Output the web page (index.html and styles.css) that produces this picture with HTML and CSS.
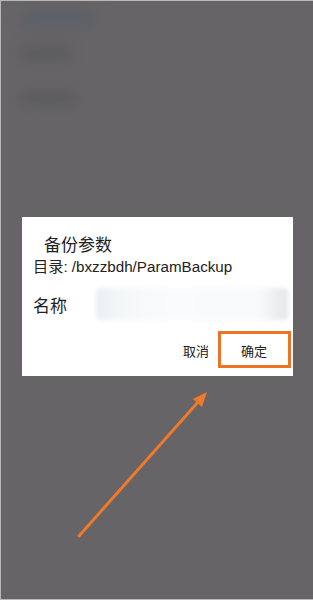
FILE: index.html
```html
<!DOCTYPE html>
<html lang="zh-CN">
<head>
  <meta charset="UTF-8">
  <title>备份参数</title>
  <link rel="stylesheet" href="styles.css">
</head>
<body>

<div class="screen">
  <!--背景里模糊的列表-->
  <div class="bg-list">
    <div class="bg-item bg-title"></div>
    <div class="bg-item bg-a"></div>
    <div class="bg-item bg-b"></div>
  </div>

  <div class="dialog">
    <div class="dialog-title">备份参数</div>
    <div class="dialog-path">目录: /bxzzbdh/ParamBackup</div>
    <div class="name-row">
      <span class="name-label">名称</span>
      <div class="name-input"></div>
    </div>
    <div class="dialog-actions">
      <span class="btn">取消</span>
      <span class="btn btn-ok">确定<span class="mark-box"></span></span>
    </div>
  </div>

  <svg class="arrow" width="313" height="600" viewBox="0 0 313 600">
    <line x1="79" y1="536" x2="199" y2="401" stroke="#ee7a2a" stroke-width="3" stroke-linecap="round"/>
    <polygon points="207,392 193,399 202,407" fill="#ee7a2a"/>
  </svg>
</div>

</body>
</html>
```

FILE: styles.css
```css
body {
  margin: 0;
  background-color: #b9b9b9;
  font-family: "Noto Sans CJK SC", "Noto Sans", sans-serif;
}
.screen {
  position: relative;
  width: 312px;
  height: 598px;
  margin-left: 1px;
  margin-top: 1px;
  background-color: #666467;
  overflow: hidden;
}
.bg-list {
  padding: 10px 0 0 20px;
  height: 216px;
  box-sizing: border-box;
}
.bg-item {
  filter: blur(6px);
  border-radius: 6px;
  margin-bottom: 20px;
}
.bg-title {
  width: 75px;
  height: 16px;
  background: #5d6168;
}
.bg-a {
  width: 50px;
  height: 14px;
  background: #5c5b5e;
  margin-top: 14px;
}
.bg-b {
  width: 55px;
  height: 14px;
  background: #5c5b5e;
  margin-top: 30px;
}
.dialog {
  margin-left: 21px;
  width: 271px;
  height: 159px;
  background: #fff;
  padding: 15px 0 0 11px;
  box-sizing: border-box;
  color: #222;
}
.dialog-title {
  font-size: 17px;
  line-height: 24px;
  padding-left: 11px;
}
.dialog-path {
  font-size: 15.2px;
  line-height: 18px;
  margin-top: 2px;
  font-family: "Liberation Sans", "Noto Sans CJK SC", sans-serif;
}
.name-row {
  display: flex;
  align-items: center;
  margin-top: 11px;
  height: 34px;
}
.name-label {
  font-size: 17px;
  width: 63px;
}
.name-input {
  width: 192px;
  height: 32px;
  background: linear-gradient(90deg, #eaeef1 0%, #f4f7f9 12%, #fafbfc 40%, #f9fafb 85%, #e4e6e8 100%);
  filter: blur(2px);
  border-radius: 4px;
}
.dialog-actions {
  display: flex;
  justify-content: flex-end;
  gap: 32px;
  margin-top: 21px;
  padding-right: 26px;
  font-size: 13px;
  line-height: 18px;
}
.btn-ok {
  position: relative;
}
.mark-box {
  position: absolute;
  left: -23px;
  top: -11px;
  width: 73px;
  height: 37px;
  border: 3px solid #ec7424;
  box-sizing: border-box;
}
.arrow {
  position: absolute;
  left: -1px;
  top: -1px;
}
```
